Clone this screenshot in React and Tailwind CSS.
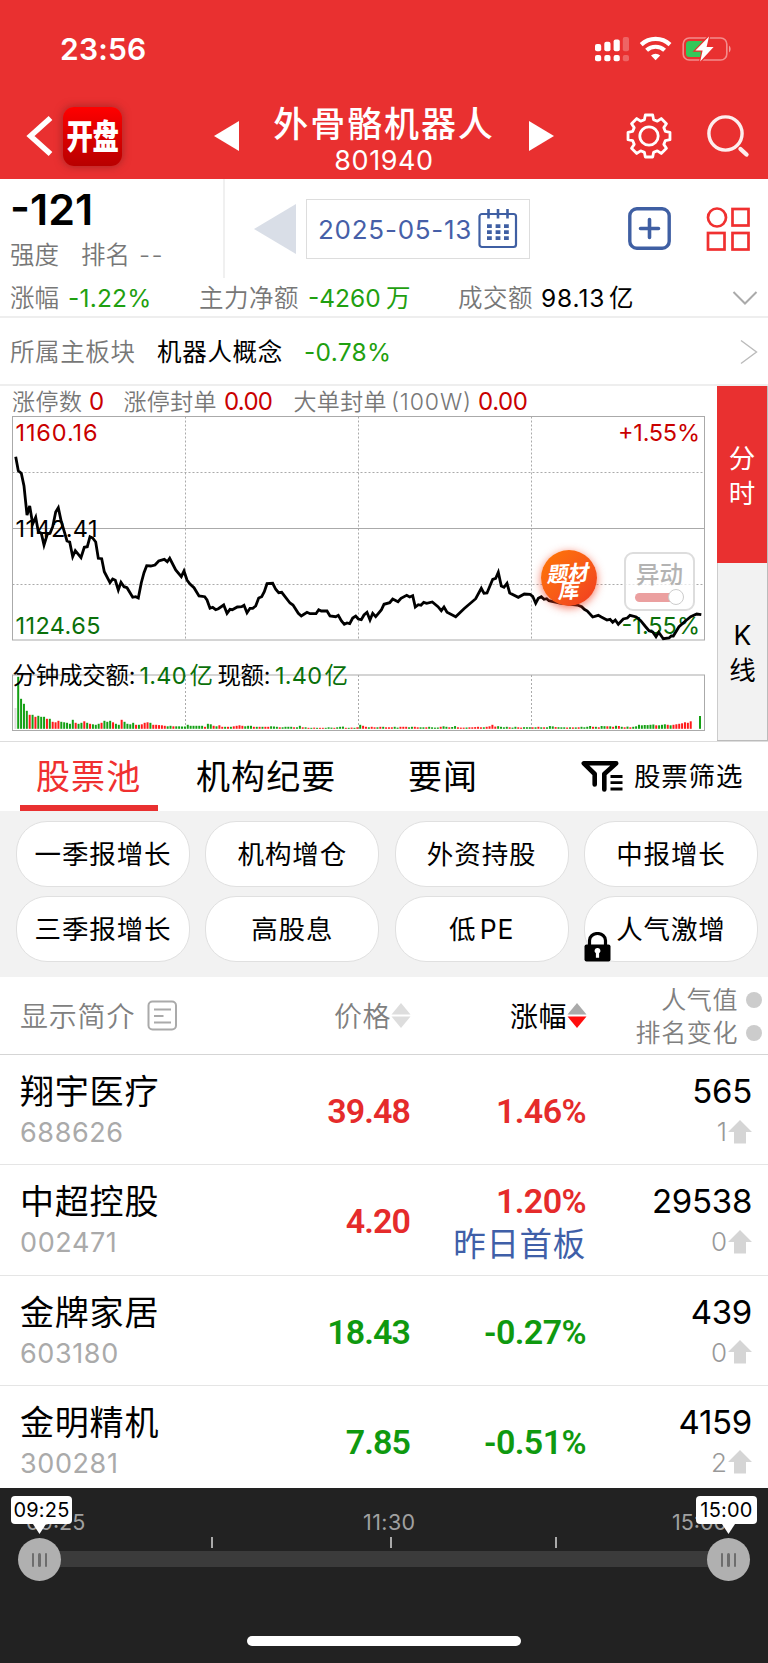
const PRICE_POINTS =
  '15.7,456.7 18.3,470.7 21.3,473.3 24,486 27,515 29.7,506 32.7,524 35.7,517.3 38.3,531.7 41.3,533.3 44,545 47.3,534.3 50,533.3 52.7,526.7 55.7,512 58.3,507.7 61.3,521.7 64.3,531.7 67,541 69.7,542 72.7,556.7 75.3,550.7 81,557.7 84.3,547.3 87.3,546.7 90,536.7 92.7,538 95.7,542 98.3,558.3 101.7,558.7 104.3,571.7 110,582.7 112.7,579 115.3,580.3 118.3,590 121,582.3 124,586.7 127,587.7 132.7,597.3 135.7,596.7 138.3,598 141.3,582.7 144,572.7 146.7,565.7 150.7,566 155,565 158.7,561 164.3,559.3 167.3,561.7 169.7,558.3 175.7,570 181.3,576.7 184,571 187,580 190,584 194,587.7 199,596 204.7,596.7 207,600 210,608.3 212.7,607.3 215.7,609.7 218.3,608.7 223.7,605 227,613.3 230,609.3 232.3,609.7 237.3,607 241.7,606.7 244,605.3 247,612.7 250,608.3 252.7,608.3 255.7,606 258.7,598 261.7,596.7 264.3,591.7 267,583.7 272.7,583.3 275.7,589.3 278.7,592.7 281.7,592.3 290,603 293,605 298.3,613.3 301.3,616 307,612.3 310,613.7 316,613.7 318.7,609.7 321.3,611 327,611 330,616 335.7,616.7 338.3,615.3 341.3,620.7 344.3,624.3 347,623 349.7,623.7 352.7,618 355.7,616 358.3,619 361.3,619.7 364,615 367,612.3 370,620 372.7,613.3 375.7,616.7 381.3,610 384,604.3 389.7,602.7 392.7,599 398,601.7 401,598.3 406.7,595.3 409.7,597 412.7,595.7 415.3,607 418.3,604.7 421,605.3 423.7,602.3 426.7,603.3 432.3,602 438,606.7 441.3,610.7 444,607 447,612.3 455.7,616.7 464,608.7 475.7,598.7 481.3,588.3 484,593.3 487,593 492.7,579.3 495.7,578.3 498.3,572.3 501.3,586 504,587.3 507,583.3 509.7,593 518.3,597.3 524.3,594 530,594.3 532.7,596.3 535.7,603.3 538.3,598.3 541.3,596.7 544,599.3 546.7,598.7 549,600.7 560,603 577.3,605 581.7,606.7 584.3,609.3 587.3,611 592.7,617 598.3,615.3 601.3,617 607,620 610,619.3 612.7,622.3 615.3,620 618.3,624.3 623.3,619 627.3,618 630,615.3 636.3,617 640.7,620.7 645,626 649,630.7 652.7,632 656,636.7 658.7,632.3 663.3,638.7 669,638 671.3,636 673.3,636 679,626.7 685.7,620.7 690.7,616.7 696.7,614 701.3,614.7';

// one bar per minute, negative = red
const VOLUMES = [
  52, 30, 25, 18, -14, 14, -12, 13, 12, 12, -10, 10, -7, -6.5, -8, 7, 6.5, 6, 5, 9, -6, 5, 6, -7.5, 6, -5, 4.5, 4, 5, -6, 8, 7,
  8, -6.5, 5, 4, -9, 7, 5, 4.5, 6, -4, 4, -4.5, -6, -6.5, 6, -4, -4, -3.7, -3.5, -3, 2.5, 3, -2.5, 2.5, 2.5, 2.3, 2.3, 4, 3, 3, 3,
  3, 3, -2, 5, 4.5, -3, 2.5, -3.5, -2, 2, -2, 2, -2.5, -3, -3.5, -3, 2.5, 3, 3, -2, 2, -2, 2, -2, -2, 2.5, 2.3, 2, -1.5, 1.5, 2, 2,
  2, -1.5, 1.5, 3, -1.5, 1.5, -1, 1, -1.2, 1, -1, -1, 1, 1.5, 1.2, -1, 1.5, 2, 2.2, -1, 1, -1.2, 1, -1.5, 4, -3, -2, 1.5, -2, -1.5, 1.5,
  -2, 2, -1.5, -1.5, -1.5, 2, 1.2, -2, -2, -2, 1.5, 2, -2, -1.5, 1.5, 1.5, -1.5, 2, 1.5, 1.2, 1.3, -2, 2.5, 2, -1.5, 1.8, 2.7, -1.5, -1.2,
  -1.2, 1.3, -1.5, -1.5, -1.7, -2, -1.5, 1.5, -2, -2.5, -4, -2.2, 2.6, 2, 1.5, 2, -1.5, 1.2, 2, -1.5, -1.2, 1.6, 1.6, 1.6, -1.5, 1.5,
  -2, 1.5, -1.5, 1.5, 2.7, 2.4, -1.7, 1.6, 1.5, 1.5, -1.3, 1.5, -1.4, 1.4, -1.5, 2, 1.5, 2, 2.8, -2, 2, -1.5, 2.8, 2.6, -2.5, 2.5, -2, 3,
  -2.8, 2, -1.5, 2.2, -1.5, 2, 2.5, 4, 3.5, 3.8, 3.7, 4, 4.3, -3.5, 3.5, 4, 4.5, -4, 3.5, -4, -4.5, -5, -5.5, -6.5, -6, -7.5,
];

const FILTERS = ['一季报增长', '机构增仓', '外资持股', '中报增长', '三季报增长', '高股息', '低PE', '人气激增'];

const STOCKS = [
  { name: '翔宇医疗', code: '688626', price: '39.48', change: '1.46%', up: true, heat: '565', rank: '1' },
  { name: '中超控股', code: '002471', price: '4.20', change: '1.20%', tag: '昨日首板', up: true, heat: '29538', rank: '0' },
  { name: '金牌家居', code: '603180', price: '18.43', change: '-0.27%', up: false, heat: '439', rank: '0' },
  { name: '金明精机', code: '300281', price: '7.85', change: '-0.51%', up: false, heat: '4159', rank: '2' },
];

// eight flat teeth around a 24,24 centre
const GEAR_POINTS = Array.from({ length: 8 }, (_, i) => i * 45)
  .flatMap((deg) => [
    [deg - 15.5, 17],
    [deg - 10, 21.3],
    [deg + 10, 21.3],
    [deg + 15.5, 17],
  ])
  .map(([deg, r]) => {
    const a = (deg * Math.PI) / 180;
    return `${(24 + r * Math.sin(a)).toFixed(2)},${(24 - r * Math.cos(a)).toFixed(2)}`;
  })
  .join(' ');

function StatusIcons() {
  return (
    <svg width="138" height="26" viewBox="594 36 138 26" fill="white">
      {[595, 604.3, 613.6].map((x, i) => (
        <g key={x}>
          <rect x={x} y={44 - i * 2.2} width="6.2" height={7.2 + i * 2.2} rx="2" />
          <rect x={x} y="55" width="6.2" height="6.2" rx="2" />
        </g>
      ))}
      <g opacity="0.25">
        <rect x="622.8" y="37" width="6.2" height="14.2" rx="2" />
        <rect x="622.8" y="55" width="6.2" height="6.2" rx="2" />
      </g>
      <g fill="none" stroke="white" strokeWidth="4.2">
        <path d="M641.2 44.6a21 21 0 0 1 28.8 0" />
        <path d="M646.6 50.3a13.2 13.2 0 0 1 18 0" />
      </g>
      <path d="M655.6 60.2l-4.6-4.7a6.8 6.8 0 0 1 9.2 0z" />
      <rect x="683.2" y="38" width="43.6" height="22" rx="6" fill="none" stroke="white" strokeOpacity="0.45" strokeWidth="1.6" />
      <path d="M729 45.5a4.5 4.5 0 0 1 0 7z" opacity="0.5" />
      <rect x="686" y="41" width="19" height="16" rx="3.5" fill="#34c759" />
      <path
        d="M709 36.5l-13.6 14h7.2l-2.4 11 13.4-14.500h-7z"
        stroke="#e93030"
        strokeWidth="2.4"
        paintOrder="stroke"
      />
    </svg>
  );
}

function GearIcon() {
  return (
    <svg width="48" height="48" viewBox="0 0 48 48" fill="none" stroke="white" strokeWidth="2.8" strokeLinejoin="round">
      <polygon points={GEAR_POINTS} />
      <circle cx="24" cy="24" r="9.2" />
    </svg>
  );
}

function Header() {
  return (
    <header className="h-[179px] bg-[#e93030] text-white">
      <div className="flex h-[98px] items-center justify-between pl-[60px] pr-[36px]">
        <span className="text-[30px] font-semibold tracking-[0.2px]">23:56</span>
        <StatusIcons />
      </div>
      <div className="flex h-[76px] items-center">
        <svg className="ml-[26px]" width="27" height="42" viewBox="0 0 27 42" fill="none" stroke="white" strokeWidth="5.5">
          <path d="M24.5 3L4.5 21l20 18" />
        </svg>
        <div className="ml-[10px] flex size-[59px] items-center justify-center rounded-[11px] bg-linear-to-b from-[#ff0000] to-[#b80000] shadow-[0_0_9px_rgba(110,30,30,0.6)]">
          <span className="scale-x-[0.8] scale-y-105 pt-[2px] text-[33px] font-black tracking-[-0.5px] whitespace-nowrap">开盘</span>
        </div>
        <svg className="ml-[92px]" width="25" height="30" viewBox="0 0 25 30" fill="white">
          <path d="M25 0v30L0 15z" />
        </svg>
        <div className="flex w-[290px] flex-col items-center pt-[8px]">
          <span className="text-[35px] leading-[42px] font-medium tracking-[1.9px]">外骨骼机器人</span>
          <span className="-mt-px text-[27px] leading-[34px] tracking-[0.6px]">801940</span>
        </div>
        <svg width="25" height="30" viewBox="0 0 25 30" fill="white">
          <path d="M0 0v30l25-15z" />
        </svg>
        <div className="ml-[71px]">
          <GearIcon />
        </div>
        <svg className="ml-[33px]" width="44" height="44" viewBox="0 0 44 44" fill="none" stroke="#fdeeee">
          <circle cx="19.5" cy="19.5" r="16.6" strokeWidth="3.4" />
          <path d="M34.5 35l6 5.5" strokeWidth="4.4" strokeLinecap="round" />
        </svg>
      </div>
    </header>
  );
}

function CalendarIcon() {
  return (
    <svg width="40" height="40" viewBox="0 0 40 40" fill="none" stroke="#3f5fa3" strokeWidth="2.2">
      <rect x="1.5" y="5" width="36.5" height="33" rx="2.5" />
      <path d="M10.5 0v9.5M20 0v9.5M29.5 0v9.5" strokeWidth="2.6" />
      <g strokeWidth="3.8">
        <path d="M9 17.2h4.8M17.6 17.2h4.8M26 17.2h4.8" />
        <path d="M9 23.2h4.8M17.6 23.2h4.8M26 23.2h4.8" />
        <path d="M9 29.2h4.8M17.6 29.2h4.8M26 29.2h4.8" />
      </g>
    </svg>
  );
}

function Summary() {
  return (
    <section className="border-b-2 border-[#eee]">
      <div className="flex h-[99px]">
        <div className="w-[225px] border-r-2 border-[#f0f0f0] pl-[10px]">
          <div className="pt-[9px] text-[43px] leading-[42px] font-semibold">-121</div>
          <div className="flex pt-[12px] text-[24.5px] leading-[26px] font-[350] text-[#777]">
            <span className="w-[71px]">强度</span>
            <span className="w-[58px]">排名</span>
            <span className="tracking-[1.5px]">--</span>
          </div>
        </div>
        <div className="flex flex-1 items-center">
          <svg className="ml-[29px]" width="42" height="50" viewBox="0 0 42 50" fill="#d9dee7">
            <path d="M42 0v50L0 25z" />
          </svg>
          <div className="mt-px ml-[10px] flex h-[60px] w-[224px] items-center justify-between border border-[#ddd] pr-[11px] pl-[11px]">
            <span className="text-[26px] tracking-[0.75px] whitespace-nowrap text-[#465fa8]">2025-05-13</span>
            <CalendarIcon />
          </div>
          <svg className="ml-[98px]" width="43" height="43" viewBox="0 0 43 43" fill="none" stroke="#3f5fa3" strokeWidth="3.4">
            <rect x="1.8" y="1.8" width="39.4" height="39.4" rx="7" />
            <path d="M12.5 21.5h18M21.5 12.5v18" strokeWidth="3.6" strokeLinecap="round" />
          </svg>
          <svg className="ml-[35px]" width="44" height="44" viewBox="0 0 44 44" fill="none" stroke="#f03030" strokeWidth="2.7">
            <circle cx="11" cy="10.5" r="9" />
            <rect x="26.5" y="2" width="16" height="16.5" />
            <rect x="2" y="26" width="16.5" height="16.5" />
            <rect x="26.5" y="26" width="16" height="16.5" />
          </svg>
        </div>
      </div>
      <div className="flex h-[38px] items-center pt-[2px] pl-[10px] text-[24.5px] leading-[36px] whitespace-nowrap">
        <span className="w-[58px] font-[350] text-[#777]">涨幅</span>
        <span className="w-[131px] tracking-[0.2px] text-[#1fa010]">-1.22%</span>
        <span className="w-[109px] font-[350] tracking-[0.5px] text-[#777]">主力净额</span>
        <span className="w-[78px] text-[#1fa010]">-4260</span>
        <span className="w-[72px] text-[#1fa010]">万</span>
        <span className="w-[83px] font-[350] tracking-[0.5px] text-[#777]">成交额</span>
        <span className="w-[68px] tracking-[0.9px]">98.13</span>
        <span>亿</span>
        <svg className="mr-[10px] ml-auto" width="26" height="14" viewBox="0 0 26 14" fill="none" stroke="#aaa" strokeWidth="2">
          <path d="M1.5 1L13 12.5 24.5 1" />
        </svg>
      </div>
    </section>
  );
}

function PlateRow() {
  return (
    <section className="flex h-[68px] items-center border-b-2 border-[#eee] pt-[2px] pl-[10px] text-[24.5px] whitespace-nowrap">
      <span className="w-[147px] font-[350] tracking-[0.6px] text-[#777]">所属主板块</span>
      <span className="w-[147px] tracking-[0.7px]">机器人概念</span>
      <span className="tracking-[0.3px] text-[#1fa010]">-0.78%</span>
      <svg className="mr-[10px] ml-auto" width="18" height="26" viewBox="0 0 18 26" fill="none" stroke="#bbb" strokeWidth="1.4">
        <path d="M1 1.5L16.500 13 1 24.500" />
      </svg>
    </section>
  );
}

function Chart() {
  return (
    <svg className="block" width="717" height="355" viewBox="0 386 717 355" fontSize="23.5">
      <g fontSize="23">
        <g fill="#777" fontWeight="350">
          <text x="12" y="410" textLength="70">涨停数</text>
          <text x="123.5" y="410" textLength="93">涨停封单</text>
          <text x="293.5" y="410" textLength="93">大单封单</text>
          <text x="391" y="410" textLength="80">(100W)</text>
        </g>
        <g fill="#c90000" fontSize="24">
          <text x="89" y="410">0</text>
          <text x="224" y="410" textLength="49">0.00</text>
          <text x="478" y="410" textLength="50">0.00</text>
        </g>
      </g>

      <g fill="none" stroke="#aaa" strokeWidth="1">
        <rect x="12.5" y="416.5" width="692" height="223.5" />
        <path d="M12.5 528.5h692" />
        <rect x="12.5" y="675" width="692" height="55.5" />
        <g strokeDasharray="2 2">
          <path d="M12.5 472.5h692M12.5 584.5h692" />
          <path d="M185.5 416.5v223M358.5 416.5v223M531.5 416.5v223" />
          <path d="M185.5 675v55M358.5 675v55M531.5 675v55" />
        </g>
      </g>

      <rect x="14.5" y="708" width="2" height="21" fill="#ddd" />
      {VOLUMES.map((v, i) => (
        <rect
          key={i}
          x={17.2 + i * 2.874}
          y={728.8 - Math.abs(v)}
          width="2"
          height={Math.abs(v)}
          fill={v < 0 ? '#ff1a1a' : '#14a014'}
        />
      ))}
      <rect x="699" y="716" width="2" height="12.8" fill="#14a014" />

      <g fill="#c90000">
        <text x="15.5" y="440.5" textLength="82">1160.16</text>
        <text x="618" y="440.5" textLength="82">+1.55%</text>
      </g>
      <g fill="#0a700a">
        <text x="15.5" y="634" textLength="85">1124.65</text>
        <text x="621.500" y="634" textLength="78.5">-1.55%</text>
      </g>
      <text x="15.5" y="536.7" textLength="82">1142.41</text>
      <polyline points={PRICE_POINTS} fill="none" stroke="black" strokeWidth="2.8" />

      <g>
        <text x="12.5" y="684" textLength="123">分钟成交额:</text>
        <text x="217.5" y="684" textLength="53">现额:</text>
        <g fill="#0a700a">
          <text x="139.5" y="684" textLength="47">1.40</text>
          <text x="189.5" y="684">亿</text>
          <text x="275" y="684" textLength="47">1.40</text>
          <text x="324.5" y="684">亿</text>
        </g>
      </g>
    </svg>
  );
}

function ChartSection() {
  return (
    <section className="relative flex h-[356px] border-b border-[#ddd]">
      <Chart />
      <div className="flex w-[51px] flex-col border-r border-b border-[#bbb] text-center text-[26.5px] leading-[35px]">
        <div className="flex h-[177px] flex-col justify-center bg-[#e93030] pt-[3px] text-white">
          <span>分</span>
          <span>时</span>
        </div>
        <div className="flex flex-1 flex-col justify-center border-l border-[#ccc] bg-[#f2f2f2] pt-[2px]">
          <span>K</span>
          <span>线</span>
        </div>
      </div>

      <div className="absolute top-[164px] left-[541px] flex size-[56px] flex-col items-center justify-center rounded-full bg-linear-to-br from-[#ff7800] to-[#f03a20] pt-[7px] text-[21px] leading-[17px] font-bold text-white shadow-[0_2px_8px_rgba(240,60,30,0.7)]">
        <span className="-rotate-3 -skew-x-12 tracking-[-0.3px]">题材</span>
        <span className="-rotate-3 -skew-x-12">库</span>
      </div>

      <div className="absolute top-[166px] left-[624px] flex h-[59px] w-[71px] flex-col items-center rounded-[9px] border-2 border-[#ddd] bg-white/70 pt-[8px]">
        <span className="text-[23.5px] leading-[26px] font-medium text-[#b3b3b3]">异动</span>
        <div className="mt-px flex w-[49px] items-center">
          <div className="h-[9px] w-[36px] rounded-l-full bg-[#eba0a0]" />
          <div className="-ml-[3px] size-[16px] shrink-0 rounded-full border-[1.5px] border-[#ccc] bg-white" />
        </div>
      </div>
    </section>
  );
}

function FilterIcon() {
  return (
    <svg width="42" height="33" viewBox="0 0 42 33" fill="none" stroke="black" strokeWidth="4.6" strokeLinejoin="round" strokeLinecap="round">
      <path d="M13.700 24.500V14L2.800 3.300h32.400L23.300 14V29.500" />
      <path d="M29.500 16.500h12M29.500 22.700h12M29.500 29h12" strokeWidth="2.8" strokeLinecap="butt" />
    </svg>
  );
}

function Tabs() {
  return (
    <nav className="flex h-[69px] text-[34px] leading-[69px] tracking-[1.1px] whitespace-nowrap">
      <div className="ml-[20px] w-[138px] border-b-6 border-[#e93030] pl-[16px] text-[#f03030]">股票池</div>
      <div className="ml-[38px] w-[212px]">机构纪要</div>
      <div className="w-[173px]">要闻</div>
      <div className="flex items-center gap-[11px] text-[26.5px] tracking-[0.8px]">
        <FilterIcon />
        <span>股票筛选</span>
      </div>
    </nav>
  );
}

function LockIcon() {
  return (
    <svg className="absolute -bottom-px -left-px" width="27" height="30" viewBox="0 0 27 30">
      <path d="M5.5 14V8.5a8 7 0 0 1 16 0V14" fill="none" stroke="black" strokeWidth="3.2" />
      <rect x="0.5" y="12.5" width="26" height="17" rx="2" />
      <path d="M13.5 16a2.8 2.8 0 0 1 1.6 5.2v4.5h-3.200v-4.500A2.800 2.800 0 0 1 13.500 16z" fill="white" />
    </svg>
  );
}

function Filters() {
  return (
    <section className="grid h-[166px] grid-cols-4 grid-rows-[66px_66px] gap-x-[15.3px] gap-y-[9px] bg-[#f2f2f2] pt-[10px] pr-[10px] pl-[16px]">
      {FILTERS.map((label, i) => (
        <button
          key={label}
          className="relative rounded-[31px] border-[1.5px] border-[#e0e0e0] bg-white pt-[2px] text-[26.5px] tracking-[0.9px] [text-autospace:normal]"
        >
          {label}
          {i === 7 && <LockIcon />}
        </button>
      ))}
    </section>
  );
}

function SortIcon({ up, down }) {
  return (
    <svg width="20" height="25" viewBox="0 0 20 25">
      <path d="M10 0l9.5 11.5H.5z" fill={up} />
      <path d="M10 25L.5 13.5h19z" fill={down} />
    </svg>
  );
}

function TableHeader() {
  return (
    <div className="flex h-[78px] items-center border-b-[1.5px] border-[#d5d5d5] pl-[20px] text-[28px] whitespace-nowrap text-[#808080]">
      <span className="w-[127px] pt-[2px] font-[350] tracking-[0.8px]">显示简介</span>
      <svg width="31" height="31" viewBox="0 0 31 31" fill="none" stroke="#aaa" strokeWidth="2">
        <rect x="1.5" y="1.5" width="27.5" height="28" rx="4" />
        <path d="M7 9.5h17M7 16h9.5M7 22.5h17" />
      </svg>
      <div className="flex flex-1 items-center justify-end font-[350] tracking-[0.5px]">
        <span className="pt-[2px]">价格</span>
        <SortIcon up="#ddd" down="#ddd" />
      </div>
      <div className="flex w-[176px] items-center justify-end tracking-[0.5px] text-black">
        <span className="pt-[2px]">涨幅</span>
        <SortIcon up="#aaa" down="#ff0d0d" />
      </div>
      <div className="flex w-[181px] flex-col items-end pt-[2px] pr-[6px] text-[25px] leading-[33px] font-[350] tracking-[0.6px]">
        <div className="flex items-center gap-[8px]">
          <span>人气值</span>
          <span className="size-[16px] rounded-full bg-[#ccc]" />
        </div>
        <div className="flex items-center gap-[8px]">
          <span>排名变化</span>
          <span className="size-[16px] rounded-full bg-[#ccc]" />
        </div>
      </div>
    </div>
  );
}

function StockRow({ stock }) {
  const color = stock.up ? 'text-[#e52b2b]' : 'text-[#0f990f]';
  return (
    <div className="flex h-[110.3px] shrink-0 border-b-[1.5px] border-[#e5e5e5] whitespace-nowrap">
      <div className="w-[240px] pt-[16px] pl-[20px]">
        <div className="text-[34px] leading-[42px] tracking-[0.8px]">{stock.name}</div>
        <div className="pt-[5px] text-[27px] leading-[30px] tracking-[0.6px] text-[#aaa]">{stock.code}</div>
      </div>
      <div className={`w-[170px] text-right font-['Roboto'] text-[34px] leading-[112px] font-semibold tracking-[-0.9px] ${color}`}>
        {stock.price}
      </div>
      <div className={`flex w-[176px] flex-col text-right ${stock.tag ? 'pt-[15px]' : 'pt-[35px]'}`}>
        <span className={`font-['Roboto'] text-[34px] leading-[42px] font-semibold tracking-[-0.6px] ${color}`}>{stock.change}</span>
        {stock.tag && <span className="pt-px text-[32.5px] leading-[44px] tracking-[0.7px] text-[#3f5fa8]">{stock.tag}</span>}
      </div>
      <div className="flex flex-1 flex-col items-end pt-[15px] pr-[16px]">
        <span className="text-[33px] leading-[42px] tracking-[-0.3px]">{stock.heat}</span>
        <div className="flex items-center gap-px pt-[4px] text-[26px] leading-[30px] font-light text-[#999]">
          <span className="pt-px">{stock.rank}</span>
          <svg width="24" height="24" viewBox="0 0 24 24" fill="#d5d5d5">
            <path d="M12 0l12 12h-6v11.5H6V12H0z" />
          </svg>
        </div>
      </div>
    </div>
  );
}

// `shift` nudges the bubble inwards from the centre of its knob
function SliderHandle({ time, className, shift }) {
  return (
    <div className={`absolute top-[8px] flex w-[62px] flex-col items-center ${className}`}>
      <span className={`flex h-[28px] w-[61px] items-center justify-center rounded-[4px] bg-white text-[20px] tracking-[0.2px] ${shift}`}>
        {time}
      </span>
      <svg width="13" height="10" viewBox="0 0 13 10" fill="white">
        <path d="M0 0h13L6.5 10z" />
      </svg>
      <div className="mt-[4px] flex size-[43px] items-center justify-center gap-[4px] rounded-full bg-[#b0b0b0]">
        <span className="h-[14px] w-[2.5px] rounded-full bg-[#6d6d6d]" />
        <span className="h-[14px] w-[2.5px] rounded-full bg-[#6d6d6d]" />
        <span className="h-[14px] w-[2.5px] rounded-full bg-[#6d6d6d]" />
      </div>
    </div>
  );
}

function TimeSlider() {
  return (
    <footer className="relative flex h-[175px] shrink-0 flex-col bg-[#222]">
      <div className="flex items-center pt-[22px] pl-[26px] text-[21.5px] leading-[24px] text-[#a0a0a0]">
        <span className="w-[337px]">09:25</span>
        <span className="w-[309px] tracking-[0.4px]">11:30</span>
        <span>15:00</span>
      </div>
      <div className="mt-[3px] flex h-[11px] pl-[211px]">
        <span className="w-[179px] border-l-2 border-[#aaa]" />
        <span className="w-[165px] border-l-2 border-[#aaa]" />
        <span className="border-l-2 border-[#aaa]" />
      </div>
      <div className="mx-[39px] mt-[3px] h-[16px] bg-[#3b3b3b]" />
      <SliderHandle time="09:25" className="left-[8.5px]" shift="ml-[4px]" />
      <SliderHandle time="15:00" className="left-[697.5px]" shift="mr-[4px]" />
      <div className="mt-auto mb-[17px] ml-[247px] h-[10px] w-[274px] rounded-full bg-white" />
    </footer>
  );
}

export default function App() {
  return (
    <div className="flex h-[1663px] w-[768px] flex-col overflow-hidden bg-white font-['Inter','Noto_Sans_CJK_SC',sans-serif] text-black">
      <Header />
      <Summary />
      <PlateRow />
      <ChartSection />
      <Tabs />
      <Filters />
      <TableHeader />
      <main className="h-[433px] overflow-hidden">
        {STOCKS.map((stock) => (
          <StockRow key={stock.code} stock={stock} />
        ))}
      </main>
      <TimeSlider />
    </div>
  );
}
